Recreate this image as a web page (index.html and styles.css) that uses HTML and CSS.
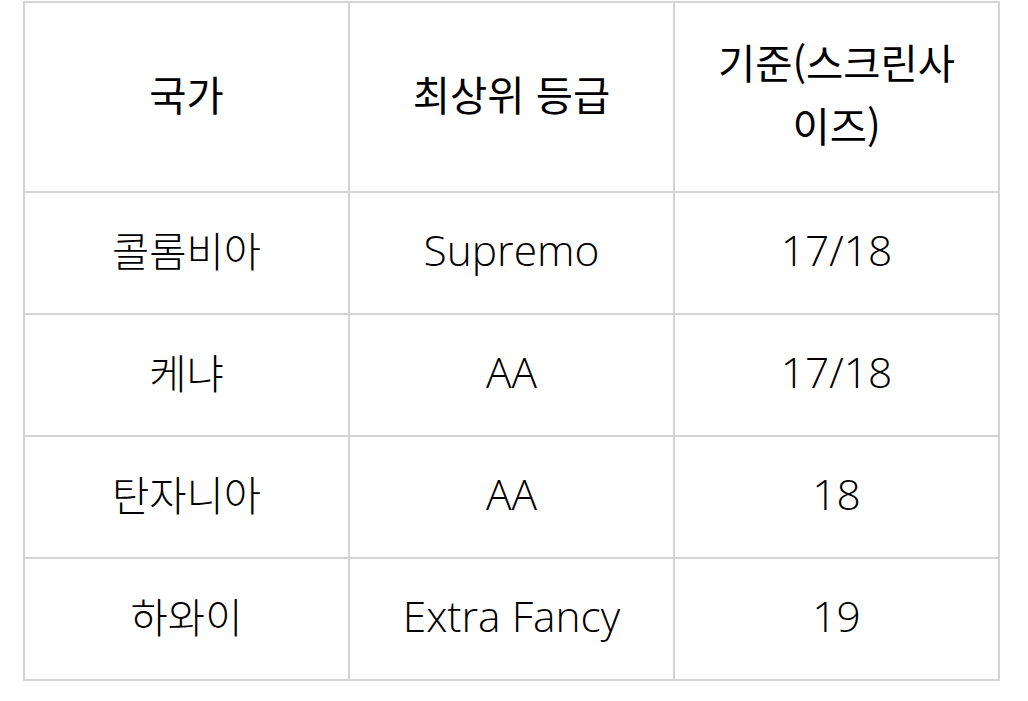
FILE: index.html
```html
<!DOCTYPE html>
<html lang="ko">
<head>
<meta charset="utf-8">
<title>등급표</title>
<link rel="stylesheet" href="styles.css">
</head>
<body>
<table class="grade-table">
  <thead>
    <tr>
      <th class="ko">국가</th>
      <th class="ko">최상위 등급</th>
      <th class="ko">기준(스크린사이즈)</th>
    </tr>
  </thead>
  <tbody>
    <tr>
      <td class="ko">콜롬비아</td>
      <td class="en">Supremo</td>
      <td class="en">17/18</td>
    </tr>
    <tr>
      <td class="ko">케냐</td>
      <td class="en">AA</td>
      <td class="en">17/18</td>
    </tr>
    <tr>
      <td class="ko">탄자니아</td>
      <td class="en">AA</td>
      <td class="en">18</td>
    </tr>
    <tr>
      <td class="ko">하와이</td>
      <td class="en">Extra Fancy</td>
      <td class="en">19</td>
    </tr>
  </tbody>
</table>
</body>
</html>
```

FILE: styles.css
```css
html, body {
  margin: 0;
  padding: 0;
  background: #ffffff;
}

body {
  padding: 1px 0 0 23px;
  color: #000;
  font-family: "Open Sans", "Noto Sans CJK KR", sans-serif;
}

.grade-table {
  border-collapse: collapse;
  table-layout: fixed;
  width: 977px;
}

.grade-table th,
.grade-table td {
  border: 2px solid #d4d4d4;
  text-align: center;
  vertical-align: middle;
  line-height: 63px;
  padding: 0 30px 8px;
}

.grade-table th {
  height: 180px;
  font-weight: 400;
}

.grade-table td {
  height: 112px;
  font-weight: 300;
}

.ko {
  font-family: "Noto Sans CJK KR", sans-serif;
  font-size: 40.5px;
}

.en {
  font-family: "Open Sans", "Noto Sans CJK KR", sans-serif;
  font-size: 42.5px;
}
```
